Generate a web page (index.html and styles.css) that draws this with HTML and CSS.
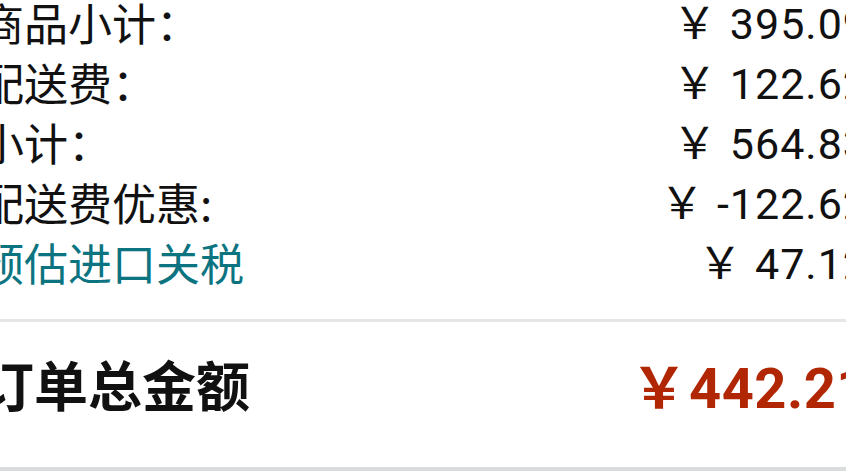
FILE: index.html
```html
<!DOCTYPE html>
<html lang="zh-CN">
<head>
<meta charset="utf-8">
<title>订单摘要</title>
<link rel="stylesheet" href="styles.css">
</head>
<body>
<div class="summary">
  <div class="lines">
    <div class="row"><span class="label">商品小计：</span><span class="amount"><span class="cur">￥</span>395.09</span></div>
    <div class="row"><span class="label">配送费：</span><span class="amount"><span class="cur">￥</span>122.62</span></div>
    <div class="row"><span class="label">小计：</span><span class="amount"><span class="cur">￥</span>564.83</span></div>
    <div class="row"><span class="label">配送费优惠:</span><span class="amount"><span class="cur">￥</span>-122.62</span></div>
    <div class="row"><a class="label link" href="#">预估进口关税</a><span class="amount"><span class="cur">￥</span>47.12</span></div>
  </div>
  <div class="total">
    <span class="total-label">订单总金额</span>
    <span class="total-amount"><span class="total-cur">￥</span>442.21</span>
  </div>
</div>
</body>
</html>
```

FILE: styles.css
```css
html, body {
  margin: 0;
  padding: 0;
  background: #ffffff;
  overflow: hidden;
}

.summary {
  margin: -8px -22px 0 -20px;
  color: #111111;
}

.lines {
  padding-bottom: 27px;
  border-bottom: 3px solid #e6e6e6;
}

.row {
  display: flex;
  justify-content: space-between;
  align-items: center;
  height: 60px;
}

.label {
  font-family: "Noto Sans CJK SC", sans-serif;
  font-size: 44px;
  line-height: 60px;
  color: #111111;
  text-decoration: none;
}

.link {
  color: #0b7480;
}

.amount {
  font-family: Roboto, "Noto Sans CJK SC", sans-serif;
  font-size: 43px;
  line-height: 60px;
  letter-spacing: 1px;
  color: #111111;
}

.cur {
  font-family: "Noto Sans CJK SC", sans-serif;
  font-size: 44px;
  letter-spacing: 0;
  margin-right: 13px;
}

.total {
  display: flex;
  justify-content: space-between;
  align-items: center;
  height: 123px;
  padding-bottom: 22px;
  border-bottom: 4px solid #d9dcdc;
}

.total-label {
  font-family: "Noto Sans CJK SC", sans-serif;
  font-weight: 700;
  font-size: 54px;
  color: #111111;
}

.total-amount {
  margin-right: -1px;
  font-family: Roboto, "Noto Sans CJK SC", sans-serif;
  font-weight: 700;
  font-size: 56px;
  letter-spacing: 0.5px;
  color: #b12704;
}

.total-cur {
  font-family: "Noto Sans CJK SC", sans-serif;
  letter-spacing: 0;
  margin-right: 2px;
}
```
